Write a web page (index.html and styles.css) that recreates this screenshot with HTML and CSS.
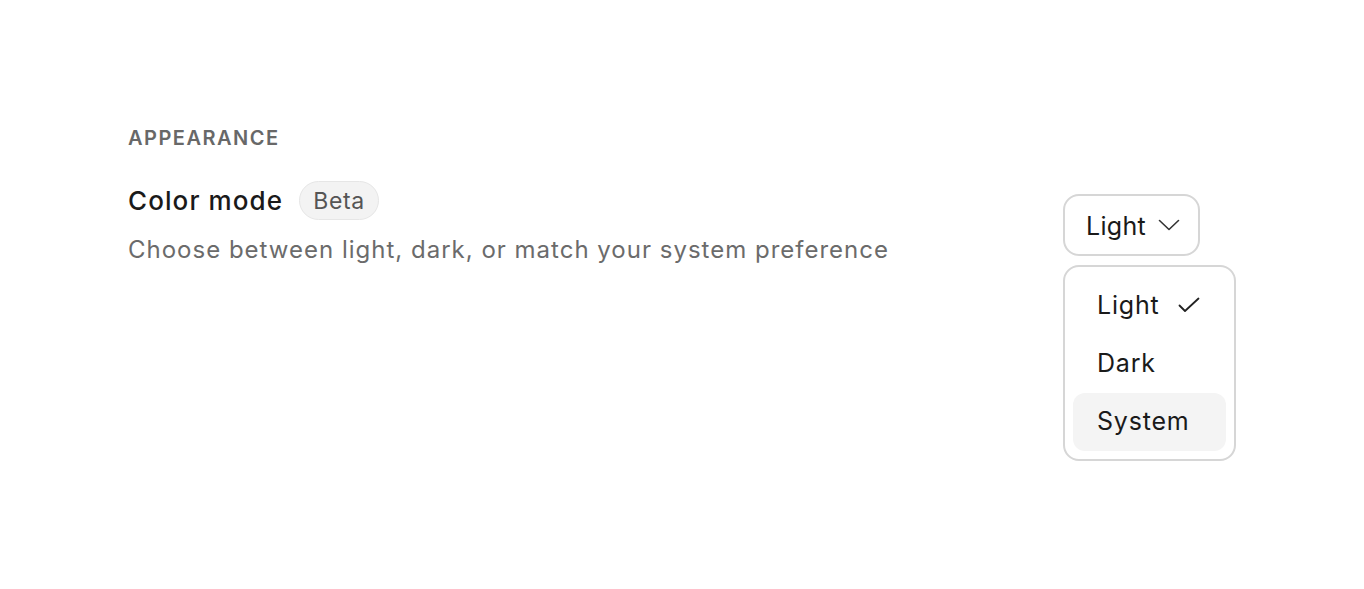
FILE: index.html
```html
<!DOCTYPE html>
<html lang="en">
<head>
<meta charset="utf-8">
<title>Appearance</title>
<link rel="stylesheet" href="styles.css">
</head>
<body>
<main class="page">
  <section class="setting">
    <div class="setting-info">
      <h2 class="section-title">APPEARANCE</h2>
      <div class="label-row">
        <span class="label">Color mode</span>
        <span class="badge">Beta</span>
      </div>
      <p class="description">Choose between light, dark, or match your system preference</p>
    </div>
    <div class="select">
      <button class="select-button" type="button">
        <span>Light</span>
        <svg class="chevron" width="22" height="12" viewBox="0 0 22 12" fill="none" stroke="#333" stroke-width="1.6" stroke-linecap="round" stroke-linejoin="round"><path d="M1.5 1.5 L11 10.5 L20.5 1.5"/></svg>
      </button>
      <ul class="menu">
        <li class="menu-item">
          <span>Light</span>
          <svg class="check" width="22" height="16" viewBox="0 0 22 16" fill="none" stroke="#222" stroke-width="1.8" stroke-linecap="round" stroke-linejoin="round"><path d="M1.5 8.5 L7 14 L20.5 1.5"/></svg>
        </li>
        <li class="menu-item">Dark</li>
        <li class="menu-item active">System</li>
      </ul>
    </div>
  </section>
</main>
</body>
</html>
```

FILE: styles.css
```css
* { box-sizing: border-box; }
html, body { margin: 0; background: #fff; }
body {
  font-family: Inter, "Noto Sans", "Liberation Sans", sans-serif;
  color: #1a1a1a;
}
.page {
  padding: 126px 128px 0 128px;
}
.setting {
  display: flex;
  justify-content: space-between;
  align-items: flex-start;
}
.section-title {
  margin: 0;
  font-size: 20px;
  line-height: 24px;
  font-weight: 600;
  letter-spacing: 1.5px;
  color: #686868;
}
.label-row {
  display: flex;
  align-items: center;
  gap: 16px;
  margin-top: 31px;
}
.label {
  font-size: 26px;
  line-height: 39px;
  font-weight: 500;
  letter-spacing: 1.1px;
  color: #1a1a1a;
}
.badge {
  display: inline-flex;
  align-items: center;
  height: 39px;
  padding: 0 13px;
  border-radius: 20px;
  background: #f3f3f3;
  border: 1.5px solid #e6e6e6;
  font-size: 23px;
  letter-spacing: 0.7px;
  color: #555;
}
.description {
  margin: 14px 0 0 0;
  font-size: 24px;
  line-height: 32px;
  letter-spacing: 1px;
  color: #6b6b6b;
}
.select {
  display: flex;
  flex-direction: column;
  align-items: flex-start;
  gap: 9px;
  margin-top: 68px;
}
.select-button {
  display: inline-flex;
  align-items: center;
  gap: 12px;
  height: 62px;
  padding: 2px 18px 0 21px;
  border: 2px solid #d6d6d6;
  border-radius: 16px;
  background: #fff;
  font-family: inherit;
  font-size: 25px;
  letter-spacing: 0.3px;
  color: #1a1a1a;
}
.chevron { display: block; margin-top: -2px; }
.menu {
  list-style: none;
  margin: 0;
  padding: 10px 8px 8px 8px;
  width: 173px;
  border: 2px solid #d6d6d6;
  border-radius: 16px;
  background: #fff;
}
.menu-item {
  display: flex;
  align-items: center;
  justify-content: space-between;
  height: 58px;
  padding: 0 26px 3px 24px;
  border-radius: 12px;
  font-size: 25px;
  letter-spacing: 0.8px;
  color: #1a1a1a;
}
.menu-item.active {
  background: #f4f4f4;
}
.check { display: block; }
```
